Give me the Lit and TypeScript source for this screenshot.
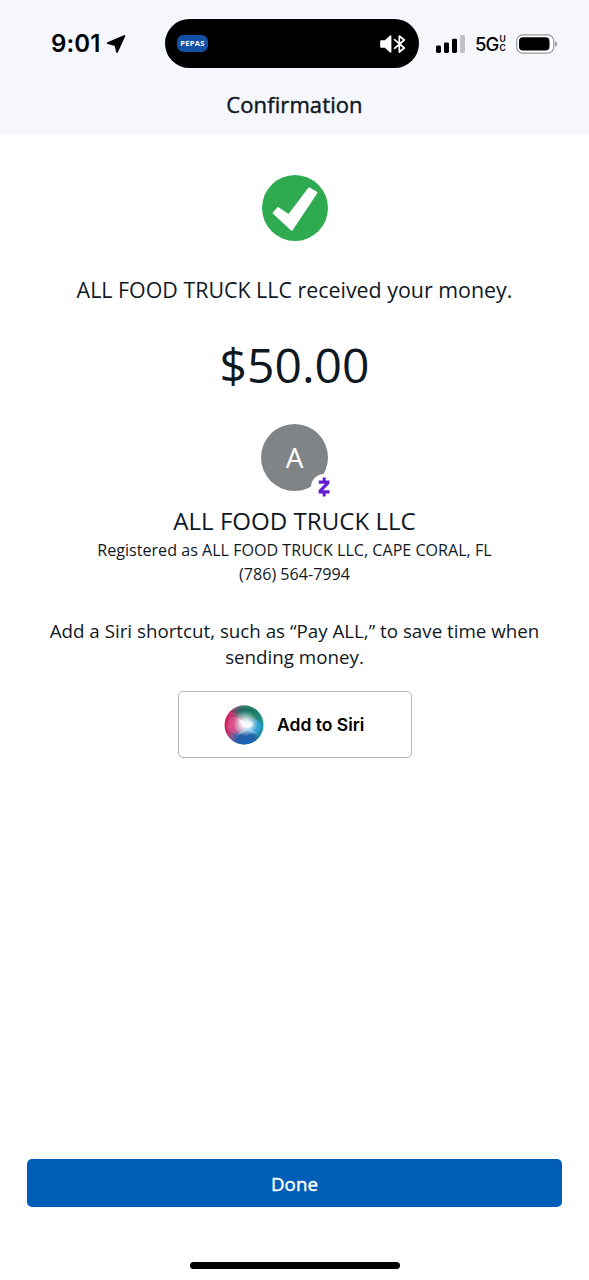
import { LitElement, html, css } from "lit";
import { customElement, property } from "lit/decorators.js";

@customElement("status-bar")
class StatusBar extends LitElement {
  @property() time = "9:01";

  static styles = css`
    :host {
      display: flex;
      align-items: center;
      height: 87px;
      padding: 0 31px 0 51px;
      box-sizing: border-box;
      font-family: Inter, sans-serif;
      color: #000;
    }
    svg {
      display: block;
      flex: none;
    }
    .clock {
      display: flex;
      align-items: center;
      width: 114px;
      gap: 6px;
    }
    .time {
      font-size: 24px;
      font-weight: 560;
      width: 49px;
      letter-spacing: 0.1px;
      white-space: nowrap;
    }
    .island {
      display: flex;
      align-items: center;
      justify-content: space-between;
      width: 254px;
      flex: none;
      height: 49px;
      box-sizing: border-box;
      padding: 0 13px 0 12px;
      border-radius: 25px;
      background: #000;
    }
    .badge {
      width: 31px;
      height: 17px;
      border-radius: 6.5px;
      background: #1350a6;
      color: #fff;
      font: 700 7.6px/17px "Open Sans", sans-serif;
      letter-spacing: 0.3px;
      text-align: center;
    }
    .signal {
      margin-left: 17px;
    }
    .network {
      display: flex;
      align-items: center;
      margin-left: 9px;
      width: 41px;
      font-size: 18.5px;
      font-weight: 500;
      letter-spacing: -0.9px;
    }
    .suffix {
      display: flex;
      flex-direction: column;
      font-size: 8.5px;
      font-weight: 600;
      line-height: 8.5px;
      margin-left: 1px;
      letter-spacing: 0;
    }
  `;

  render() {
    return html`
      <div class="clock">
        <span class="time">${this.time}</span>
        <svg width="20" height="20" viewBox="0 0 20 20">
          <path d="M18.3 2 11 17.8 9.4 11.1 1.8 9.2Z" stroke="#000" stroke-width="1.9" stroke-linejoin="round" />
        </svg>
      </div>
      <div class="island">
        <div class="badge">PEPAS</div>
        <svg width="26" height="20" viewBox="0 0 26 20">
          <path d="M1 6.3h3.8L10 1.5q1.4-.8 1.4.8v15.4q0 1.6-1.4.8l-5.2-4.8H1q-.8 0-.8-.8V7.1q0-.8.8-.8Z" fill="#fff" />
          <path d="M14.5 5.7 24.3 14l-5 4V2l5 4-9.8 8.3" fill="none" stroke="#fff" stroke-width="1.7" stroke-linejoin="round" stroke-linecap="round" />
        </svg>
      </div>
      <svg class="signal" width="30" height="20" viewBox="0 0 30 20">
        <rect x="0" y="11.5" width="5" height="7.5" rx="1.4" />
        <rect x="8" y="8.5" width="5" height="10.5" rx="1.4" />
        <rect x="16" y="4.7" width="5" height="14.3" rx="1.4" />
        <rect x="24" y="1" width="5" height="18" rx="1.4" fill="#c0c1c4" />
      </svg>
      <div class="network">
        <span>5G</span>
        <span class="suffix"><span>U</span><span>C</span></span>
      </div>
      <svg width="42" height="20" viewBox="0 0 42 20">
        <rect x=".7" y=".8" width="37" height="18.4" rx="6" fill="#fff" stroke="#999a9c" stroke-width="1.2" />
        <rect x="3" y="3.2" width="30.5" height="13.4" rx="4" />
        <path d="M39 7q2.4.8 2.4 3T39 13Z" fill="#a3a4a7" />
      </svg>
    `;
  }
}

@customElement("siri-orb")
class SiriOrb extends LitElement {
  static styles = css`
    :host,
    svg {
      display: block;
    }
  `;

  render() {
    return html`
      <svg width="40" height="40" viewBox="0 0 40 40">
        <defs>
          <linearGradient id="base" x1="0" y1=".35" x2="1" y2=".6">
            <stop offset="0" stop-color="#d81f5c" />
            <stop offset=".3" stop-color="#a84a80" />
            <stop offset=".6" stop-color="#2f8f92" />
            <stop offset="1" stop-color="#159aa5" />
          </linearGradient>
          <radialGradient id="green" cx=".68" cy=".12" r=".5">
            <stop offset="0" stop-color="#1c8068" />
            <stop offset=".5" stop-color="#25806c" stop-opacity=".85" />
            <stop offset="1" stop-color="#2e9a85" stop-opacity="0" />
          </radialGradient>
          <radialGradient id="blue" cx=".55" cy=".97" r=".5">
            <stop offset="0" stop-color="#1762b8" />
            <stop offset=".5" stop-color="#1f5da8" stop-opacity=".9" />
            <stop offset="1" stop-color="#3f7cc0" stop-opacity="0" />
          </radialGradient>
          <radialGradient id="glow" cx=".54" cy=".47" r=".32">
            <stop offset="0" stop-color="#fff" />
            <stop offset=".3" stop-color="#fff" stop-opacity=".85" />
            <stop offset="1" stop-color="#fff" stop-opacity="0" />
          </radialGradient>
        </defs>
        <circle cx="20" cy="20" r="19.5" fill="url(#base)" />
        <circle cx="20" cy="20" r="19.5" fill="url(#green)" />
        <circle cx="20" cy="20" r="19.5" fill="url(#blue)" />
        <path d="M7 6Q20-1 33 8q-11-4-17-1-5 3-9-1Z" fill="#14504d" opacity=".35" />
        <circle cx="12" cy="20" r="8.5" fill="#f25b98" opacity=".55" />
        <circle cx="29.5" cy="21.5" r="7.5" fill="#39a6ee" opacity=".65" />
        <circle cx="20" cy="20" r="19.5" fill="url(#glow)" />
        <path d="M23 20 34 30 24 25 12 31Z" fill="#d5eaff" opacity=".4" />
        <path d="M14 14q5 1 8 4 5-2 7 0 1 4-4 5-7 0-11-9Z" fill="#fff" opacity=".7" />
      </svg>
    `;
  }
}

@customElement("app-root")
class AppRoot extends LitElement {
  static styles = css`
    :host {
      display: flex;
      flex-direction: column;
      height: 1280px;
      background: #fff;
      color: #10181f;
      font-family: "Open Sans", sans-serif;
      text-align: center;
    }
    svg {
      display: block;
    }
    header {
      height: 134px;
      background: #f5f7fc;
    }
    h1 {
      margin: 0;
      font-size: 22px;
      font-weight: 400;
      line-height: 35px;
      letter-spacing: 0.1px;
      -webkit-text-stroke: 0.45px currentColor;
    }
    main {
      display: flex;
      flex-direction: column;
      align-items: center;
      flex: 1;
      white-space: nowrap;
    }
    .check {
      margin-top: 40px;
    }
    .message {
      margin-top: 32px;
      font-size: 21.4px;
      line-height: 32px;
    }
    .amount {
      margin-top: 27px;
      font-size: 48px;
      line-height: 64px;
    }
    .avatar {
      position: relative;
      width: 67px;
      height: 67px;
      margin-top: 27px;
      border-radius: 50%;
      background: #818487;
      color: #fff;
      font-size: 28px;
      line-height: 67px;
    }
    .zelle {
      position: absolute;
      left: 50px;
      top: 50px;
    }
    h2 {
      margin: 13px 0 0;
      font-size: 24.1px;
      font-weight: 400;
      line-height: 34px;
    }
    .detail {
      font-size: 16.1px;
      line-height: 24px;
    }
    .hint {
      margin-top: 32px;
      font-size: 18.75px;
      line-height: 25.5px;
    }
    .siri {
      display: flex;
      align-items: center;
      gap: 13px;
      width: 234px;
      height: 67px;
      margin: 22px 0 0 1px;
      padding: 0 0 0 45px;
      box-sizing: border-box;
      border: 1.5px solid #b4b5b6;
      border-radius: 5px;
      background: #fff;
      color: #000;
      font: 600 17.5px Inter, sans-serif;
    }
    footer {
      display: flex;
      flex-direction: column;
      align-items: center;
      padding: 0 27px 11px;
    }
    .done {
      width: 100%;
      height: 48px;
      border: 0;
      border-radius: 5px;
      background: #005eb8;
      color: #fff;
      font: 400 18.7px "Open Sans", sans-serif;
      letter-spacing: 0.1px;
      -webkit-text-stroke: 0.4px currentColor;
    }
    .home {
      width: 210px;
      height: 7px;
      margin-top: 55px;
      border-radius: 4px;
      background: #000;
    }
  `;

  render() {
    return html`
      <header>
        <status-bar></status-bar>
        <h1>Confirmation</h1>
      </header>
      <main>
        <svg class="check" width="68" height="68" viewBox="0 0 68 68">
          <circle cx="34" cy="34" r="33" fill="#2eaa50" />
          <path d="M12.7 39 17.1 34.1 27.8 41.4 48.1 14.3 55.4 18.7 30.8 55.7Z" fill="#fff" stroke="#fff" stroke-width="2" stroke-linejoin="round" />
        </svg>
        <div class="message">ALL FOOD TRUCK LLC received your money.</div>
        <div class="amount">$50.00</div>
        <div class="avatar">
          A
          <svg class="zelle" width="26" height="26" viewBox="0 0 26 26">
            <circle cx="13" cy="13" r="13" fill="#fff" />
            <path d="M7.8 6.6h10.6v3.2L12 16.2h6.6v3.2H7.6v-3.1L14 9.8H7.8ZM11.7 3.4h3v4h-3ZM11.7 18.6h3v3.8h-3Z" fill="#641cd0" />
          </svg>
        </div>
        <h2>ALL FOOD TRUCK LLC</h2>
        <div class="detail">Registered as ALL FOOD TRUCK LLC, CAPE CORAL, FL</div>
        <div class="detail">(786) 564-7994</div>
        <div class="hint">
          Add a Siri shortcut, such as “Pay ALL,” to save time when<br />sending money.
        </div>
        <button class="siri"><siri-orb></siri-orb><span>Add to Siri</span></button>
      </main>
      <footer>
        <button class="done">Done</button>
        <div class="home"></div>
      </footer>
    `;
  }
}
